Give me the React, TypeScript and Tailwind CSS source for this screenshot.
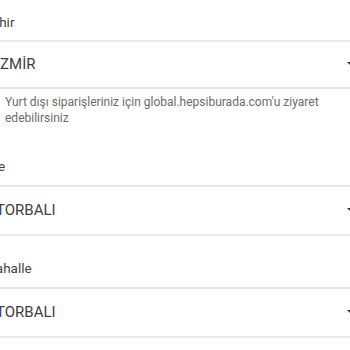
const Caret = () => (
  <svg width="10" height="5" viewBox="0 0 10 5" className="shrink-0">
    <path d="M0 0h10L5 5z" fill="#333" />
  </svg>
);

const Label = ({ text, h }: { text: string; h: string }) => (
  <div className={`${h} flex items-end pb-[10px] text-[13.5px] leading-[18px] text-[#424242]`}>
    {text}
  </div>
);

const Select = ({ value, h }: { value: string; h: string }) => (
  <div className={`${h} flex items-center justify-between border-y-2 border-[#e8e8e8] pl-[12px] pr-[9px]`}>
    <span className="text-[15px] text-[#404040]">{value}</span>
    <Caret />
  </div>
);

export default function App() {
  return (
    <div
      className="ml-[-16px] w-[382px] bg-white"
      style={{ fontFamily: "Roboto, 'Noto Sans', sans-serif" }}
    >
      <div className="h-[40px] flex items-end pb-[9px] text-[13.5px] leading-[18px] text-[#424242]">
        Şehir
      </div>
      <Select value="İZMİR" h="h-[49px]" />
      <p className="pt-[5px] pl-[21px] pr-[40px] text-[12px] leading-[16px] text-[#6b6b6b]">
        Yurt dışı siparişleriniz için global.hepsiburada.com'u ziyaret
        edebilirsiniz
      </p>
      <Label text="İlçe" h="h-[59px]" />
      <Select value="TORBALI" h="h-[51px]" />
      <Label text="Mahalle" h="h-[51px]" />
      <Select value="TORBALI" h="h-[51px]" />
    </div>
  );
}
